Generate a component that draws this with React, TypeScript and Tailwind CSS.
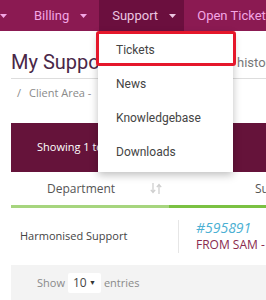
import React from "react";

const Caret = ({ color = "#f3a6e4" }: { color?: string }) => (
  <svg width="7" height="4" viewBox="0 0 7 4" className="shrink-0">
    <path d="M0 0h7L3.5 4z" fill={color} />
  </svg>
);

const SortIcon = () => (
  <svg width="12" height="11" viewBox="0 0 12 11" className="shrink-0">
    <path d="M3 0v9M0.8 6.8L3 9.5l2.2-2.7" stroke="#cfcfcf" strokeWidth="1.3" fill="none" />
    <path d="M9 11V2M6.8 4.2L9 1.5l2.2 2.7" stroke="#cfcfcf" strokeWidth="1.3" fill="none" />
  </svg>
);

const App: React.FC = () => {
  return (
    <div className="relative w-[266px] h-[300px] overflow-hidden bg-white">
      {/* Top navigation */}
      <nav className="flex h-[31px] bg-[#8b1a52] font-['Roboto',sans-serif] text-[13px]">
        <div className="flex w-[22px] items-center justify-end pr-[13px]">
          <Caret />
        </div>
        <div className="flex items-center gap-[11px] pl-[14px] pr-[12px] text-[#f3a6e4]">
          <span>Billing</span>
          <Caret />
        </div>
        <div className="flex w-[85px] items-center gap-[11px] bg-[#6b0f3e] px-[13px] text-[#ecc6e0]">
          <span>Support</span>
          <Caret color="#ecc6e0" />
        </div>
        <div className="flex items-center whitespace-nowrap px-[13px] text-[#f3a6e4]">
          Open Ticket
        </div>
      </nav>

      {/* Page content */}
      <div className="w-[420px] pl-[11px] font-['Open_Sans',sans-serif]">
        <div className="flex items-end border-b border-[#dddddd] pt-[17px] pb-[2px]">
          <h1 className="w-[226px] font-['Roboto',sans-serif] text-[20px] leading-[28px] text-[#4a2748]">
            My Support Tickets
          </h1>
          <span className="pb-[4px] font-['Roboto',sans-serif] text-[13px] text-[#777777]">history</span>
        </div>

        <div className="flex items-center pt-[6px] text-[11px] leading-[16px] text-[#8a8a8a]">
          <span className="pl-[6px]">/</span>
          <span className="pl-[8px]">Client Area -</span>
          <span className="pl-[11px]">/</span>
          <span className="pl-[8px]">Support Tickets</span>
        </div>

        <div className="mt-[22px] flex h-[49px] items-center bg-[#65133a] pl-[26px] text-[11px] text-white">
          Showing 1 to 1 of 1 entries
        </div>

        {/* Table */}
        <div className="flex h-[33px] items-center text-[12px] text-[#555555]">
          <div className="flex w-[158px] items-center pl-[36px]">
            <span className="w-[103px]">Department</span>
            <SortIcon />
          </div>
          <div className="pl-[86px]">Subject</div>
        </div>
        <div className="flex h-[3px]">
          <div className="w-[158px] bg-[#a6d57e]" />
          <div className="flex-1 bg-[#7ac142]" />
        </div>
        <div className="flex h-[57px] items-center">
          <div className="w-[167px] pl-[9px] text-[11px] text-[#444444]">Harmonised Support</div>
          <div className="flex h-[33px] flex-col justify-center border-l border-[#e6e6e6] pl-[17px]">
            <span className="text-[14px] leading-[16px] italic text-[#4bb0d3]">#595891</span>
            <span className="text-[12px] leading-[17px] text-[#8a2a4e]">FROM SAM - Problem with login</span>
          </div>
        </div>

        <div className="flex h-[40px] items-center gap-[3px] bg-[#f3f3f3] pb-[4px] pl-[26px] text-[11px] text-[#8a8a8a]">
          <span>Show</span>
          <div className="flex h-[20px] w-[33px] items-center justify-between rounded-[2px] bg-white px-[5px] text-[12px] text-[#444444]">
            <span>10</span>
            <span className="text-[7px] text-[#333333]">▼</span>
          </div>
          <span>entries</span>
        </div>
      </div>

      {/* Support dropdown */}
      <div className="absolute left-[98px] top-[32px] w-[135px] bg-white pt-[1px] pb-[3px] font-['Roboto',sans-serif] text-[12px] text-[#444444] shadow-[0_3px_8px_rgba(0,0,0,0.25)]">
        {["Tickets", "News", "Knowledgebase", "Downloads"].map((item) => (
          <div key={item} className="flex h-[34px] items-center pl-[18px]">
            {item}
          </div>
        ))}
      </div>
      <div className="absolute left-[96px] top-[31px] h-[35px] w-[140px] rounded-[3px] border-[3px] border-[#e5172b]" />
    </div>
  );
};

export default App;
